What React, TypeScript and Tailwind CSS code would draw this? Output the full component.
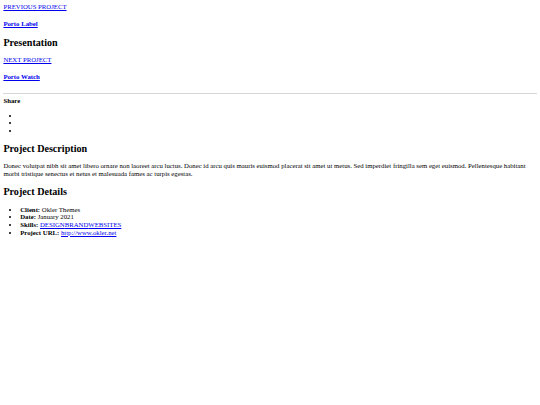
import { FC } from "react";

const link = "text-[#0000ee] underline";

const App: FC = () => (
  <div className="min-h-screen bg-white p-[3.375px] font-['Liberation_Serif','Times_New_Roman',serif] text-[6.75px] leading-[1.125] text-black">
    <div>
      <a href="#" className={link}>PREVIOUS PROJECT</a>
      <h4 className="my-[1.33em] text-[1em] font-bold">
        <a href="#" className={link}>Porto Label</a>
      </h4>
    </div>
    <h2 className="my-[0.83em] text-[1.5em] font-bold">Presentation</h2>
    <div className="flow-root">
      <a href="#" className={link}>NEXT PROJECT</a>
      <h4 className="my-[1.33em] text-[1em] font-bold">
        <a href="#" className={link}>Porto Watch</a>
      </h4>
    </div>
    <hr className="my-[0.5em] border-t border-[#d6d6d6]" />
    <div>
      <strong className="font-bold">Share</strong>
    </div>
    <ul className="my-[1em] list-disc pl-[16.875px]">
      <li></li>
      <li></li>
      <li></li>
    </ul>
    <h2 className="my-[0.83em] text-[1.5em] font-bold">Project Description</h2>
    <p className="my-[1em]">
      Donec volutpat nibh sit amet libero ornare non laoreet arcu luctus. Donec id arcu quis mauris euismod placerat sit amet ut metus. Sed imperdiet fringilla sem eget euismod. Pellentesque habitant morbi tristique senectus et netus et malesuada fames ac turpis egestas.
    </p>
    <h2 className="my-[0.83em] text-[1.5em] font-bold">Project Details</h2>
    <ul className="my-[1em] list-disc pl-[16.875px]">
      <li>
        <strong>Client:</strong> Okler Themes
      </li>
      <li>
        <strong>Date:</strong> January 2021
      </li>
      <li>
        <strong>Skills:</strong>{" "}
        <a href="#" className={link}>DESIGN</a>
        <a href="#" className={link}>BRAND</a>
        <a href="#" className={link}>WEBSITES</a>
      </li>
      <li>
        <strong>Project URL:</strong>{" "}
        <a href="#" className={link}>http://www.okler.net</a>
      </li>
    </ul>
  </div>
);

export default App;
